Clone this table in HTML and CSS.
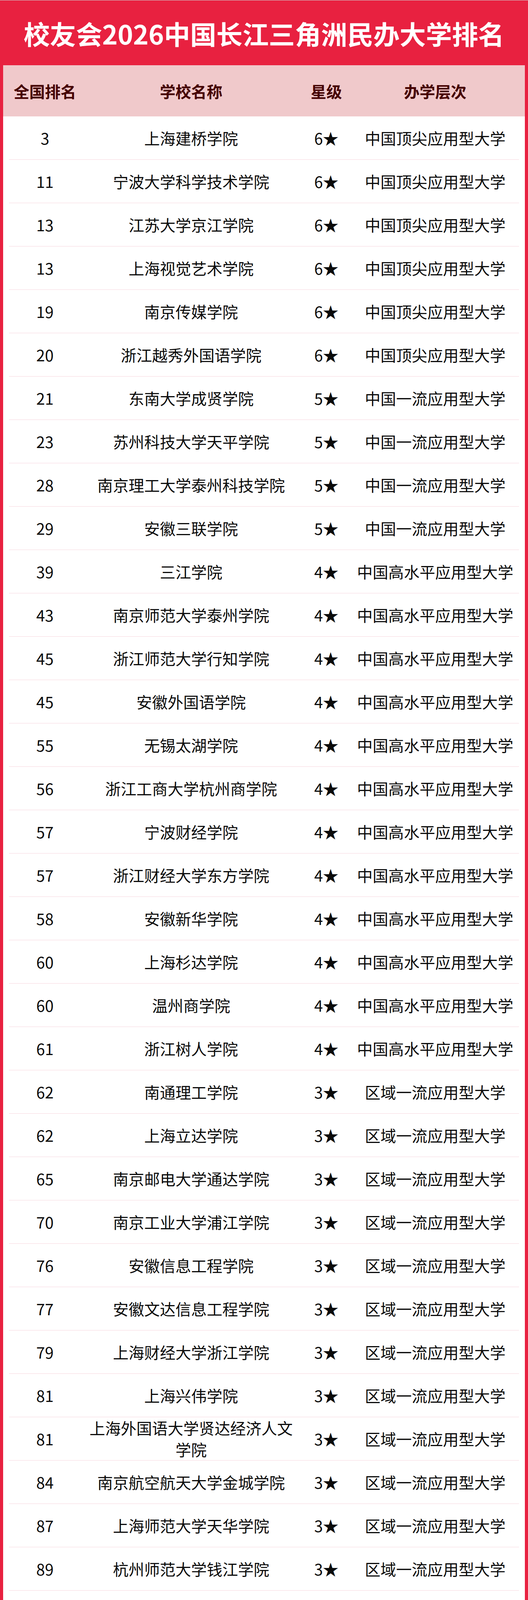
FILE: index.html
```html
<!DOCTYPE html>
<html lang="zh-CN">
<head>
<meta charset="utf-8">
<title>校友会2026中国长江三角洲民办大学排名</title>
<link rel="stylesheet" href="styles.css">
</head>
<body>
<div class="page">
  <h1 class="title">校友会2026中国长江三角洲民办大学排名</h1>
  <div class="sheet">
    <div class="thead">
      <div>全国排名</div><div>学校名称</div><div>星级</div><div>办学层次</div>
    </div>
    <div class="tbody">
      <div class="row"><div>3</div><div class="name">上海建桥学院</div><div>6★</div><div>中国顶尖应用型大学</div></div>
      <div class="row"><div>11</div><div class="name">宁波大学科学技术学院</div><div>6★</div><div>中国顶尖应用型大学</div></div>
      <div class="row"><div>13</div><div class="name">江苏大学京江学院</div><div>6★</div><div>中国顶尖应用型大学</div></div>
      <div class="row"><div>13</div><div class="name">上海视觉艺术学院</div><div>6★</div><div>中国顶尖应用型大学</div></div>
      <div class="row"><div>19</div><div class="name">南京传媒学院</div><div>6★</div><div>中国顶尖应用型大学</div></div>
      <div class="row"><div>20</div><div class="name">浙江越秀外国语学院</div><div>6★</div><div>中国顶尖应用型大学</div></div>
      <div class="row"><div>21</div><div class="name">东南大学成贤学院</div><div>5★</div><div>中国一流应用型大学</div></div>
      <div class="row"><div>23</div><div class="name">苏州科技大学天平学院</div><div>5★</div><div>中国一流应用型大学</div></div>
      <div class="row"><div>28</div><div class="name">南京理工大学泰州科技学院</div><div>5★</div><div>中国一流应用型大学</div></div>
      <div class="row"><div>29</div><div class="name">安徽三联学院</div><div>5★</div><div>中国一流应用型大学</div></div>
      <div class="row"><div>39</div><div class="name">三江学院</div><div>4★</div><div>中国高水平应用型大学</div></div>
      <div class="row"><div>43</div><div class="name">南京师范大学泰州学院</div><div>4★</div><div>中国高水平应用型大学</div></div>
      <div class="row"><div>45</div><div class="name">浙江师范大学行知学院</div><div>4★</div><div>中国高水平应用型大学</div></div>
      <div class="row"><div>45</div><div class="name">安徽外国语学院</div><div>4★</div><div>中国高水平应用型大学</div></div>
      <div class="row"><div>55</div><div class="name">无锡太湖学院</div><div>4★</div><div>中国高水平应用型大学</div></div>
      <div class="row"><div>56</div><div class="name">浙江工商大学杭州商学院</div><div>4★</div><div>中国高水平应用型大学</div></div>
      <div class="row"><div>57</div><div class="name">宁波财经学院</div><div>4★</div><div>中国高水平应用型大学</div></div>
      <div class="row"><div>57</div><div class="name">浙江财经大学东方学院</div><div>4★</div><div>中国高水平应用型大学</div></div>
      <div class="row"><div>58</div><div class="name">安徽新华学院</div><div>4★</div><div>中国高水平应用型大学</div></div>
      <div class="row"><div>60</div><div class="name">上海杉达学院</div><div>4★</div><div>中国高水平应用型大学</div></div>
      <div class="row"><div>60</div><div class="name">温州商学院</div><div>4★</div><div>中国高水平应用型大学</div></div>
      <div class="row"><div>61</div><div class="name">浙江树人学院</div><div>4★</div><div>中国高水平应用型大学</div></div>
      <div class="row"><div>62</div><div class="name">南通理工学院</div><div>3★</div><div>区域一流应用型大学</div></div>
      <div class="row"><div>62</div><div class="name">上海立达学院</div><div>3★</div><div>区域一流应用型大学</div></div>
      <div class="row"><div>65</div><div class="name">南京邮电大学通达学院</div><div>3★</div><div>区域一流应用型大学</div></div>
      <div class="row"><div>70</div><div class="name">南京工业大学浦江学院</div><div>3★</div><div>区域一流应用型大学</div></div>
      <div class="row"><div>76</div><div class="name">安徽信息工程学院</div><div>3★</div><div>区域一流应用型大学</div></div>
      <div class="row"><div>77</div><div class="name">安徽文达信息工程学院</div><div>3★</div><div>区域一流应用型大学</div></div>
      <div class="row"><div>79</div><div class="name">上海财经大学浙江学院</div><div>3★</div><div>区域一流应用型大学</div></div>
      <div class="row"><div>81</div><div class="name">上海兴伟学院</div><div>3★</div><div>区域一流应用型大学</div></div>
      <div class="row"><div>81</div><div class="name">上海外国语大学贤达经济人文学院</div><div>3★</div><div>区域一流应用型大学</div></div>
      <div class="row"><div>84</div><div class="name">南京航空航天大学金城学院</div><div>3★</div><div>区域一流应用型大学</div></div>
      <div class="row"><div>87</div><div class="name">上海师范大学天华学院</div><div>3★</div><div>区域一流应用型大学</div></div>
      <div class="row"><div>89</div><div class="name">杭州师范大学钱江学院</div><div>3★</div><div>区域一流应用型大学</div></div>
      <div class="row"><div>90</div><div class="name">南通大学杏林学院</div><div>3★</div><div>区域一流应用型大学</div></div>
      <div class="row"><div>90</div><div class="name">合肥经济学院</div><div>3★</div><div>区域一流应用型大学</div></div>
      <div class="row"><div>91</div><div class="name">南京审计大学金审学院</div><div>2★</div><div>区域高水平应用型大学</div></div>
      <div class="row"><div>91</div><div class="name">扬州大学广陵学院</div><div>2★</div><div>区域高水平应用型大学</div></div>
      <div class="row"><div>92</div><div class="name">阜阳理工学院</div><div>2★</div><div>区域高水平应用型大学</div></div>
      <div class="row"><div>97</div><div class="name">蚌埠工商学院</div><div>2★</div><div>区域高水平应用型大学</div></div>
      <div class="row"><div>97</div><div class="name">南京医科大学康达学院</div><div>2★</div><div>区域高水平应用型大学</div></div>
      <div class="row"><div>98</div><div class="name">江苏师范大学科文学院</div><div>2★</div><div>区域高水平应用型大学</div></div>
      <div class="row"><div>98</div><div class="name">同济大学浙江学院</div><div>2★</div><div>区域高水平应用型大学</div></div>
      <div class="row"><div>98</div><div class="name">江苏科技大学苏州理工学院</div><div>2★</div><div>区域高水平应用型大学</div></div>
      <div class="row"><div>98</div><div class="name">南京财经大学红山学院</div><div>2★</div><div>区域高水平应用型大学</div></div>
      <div class="row"><div>98</div><div class="name">南京师范大学中北学院</div><div>2★</div><div>区域高水平应用型大学</div></div>
      <div class="row"><div>98</div><div class="name">苏州大学应用技术学院</div><div>2★</div><div>区域高水平应用型大学</div></div>
      <div class="row"><div>99</div><div class="name">杭州电子科技大学信息工程学院</div><div>2★</div><div>区域高水平应用型大学</div></div>
      <div class="row"><div>99</div><div class="name">合肥城市学院</div><div>2★</div><div>区域高水平应用型大学</div></div>
      <div class="row"><div>99</div><div class="name">南京理工大学紫金学院</div><div>2★</div><div>区域高水平应用型大学</div></div>
      <div class="row"><div>99</div><div class="name">浙江工业大学之江学院</div><div>2★</div><div>区域高水平应用型大学</div></div>
      <div class="row"><div>116</div><div class="name">常州大学怀德学院</div><div>1★</div><div>区域知名应用型大学</div></div>
      <div class="row"><div>116</div><div class="name">浙江农林大学暨阳学院</div><div>1★</div><div>区域知名应用型大学</div></div>
      <div class="row"><div>118</div><div class="name">皖江工学院</div><div>2★</div><div>区域高水平应用型大学</div></div>
      <div class="row"><div>118</div><div class="name">淮北理工学院</div><div>2★</div><div>区域高水平应用型大学</div></div>
      <div class="row"><div>118</div><div class="name">马鞍山学院</div><div>2★</div><div>区域高水平应用型大学</div></div>
      <div class="row"><div>118</div><div class="name">芜湖学院</div><div>2★</div><div>区域高水平应用型大学</div></div>
      <div class="row"><div>118</div><div class="name">中国矿业大学徐海学院</div><div>2★</div><div>区域高水平应用型大学</div></div>
      <div class="row"><div>118</div><div class="name">安徽医科大学临床医学院</div><div>1★</div><div>区域知名应用型大学</div></div>
      <div class="row"><div>118</div><div class="name">南京中医药大学翰林学院</div><div>1★</div><div>区域知名应用型大学</div></div>
      <div class="row"><div>118</div><div class="name">温州医科大学仁济学院</div><div>1★</div><div>区域知名应用型大学</div></div>
      <div class="row"><div>118</div><div class="name">浙江理工大学科技与艺术学院</div><div>1★</div><div>区域知名应用型大学</div></div>
      <div class="row"><div>118</div><div class="name">浙江中医药大学滨江学院</div><div>1★</div><div>区域知名应用型大学</div></div>
      <div class="row"><div>130</div><div class="name">中国计量大学现代科技学院</div><div>1★</div><div>区域知名应用型大学</div></div>
    </div>
  </div>
  <div class="footer">排名详见：科学出版社《2026校友会中国大学排名：高考志愿填报指南》</div>
</div>
</body>
</html>
```

FILE: styles.css
```css
html, body {
  margin: 0;
  padding: 0;
}
body {
  background: #e82140;
  font-family: "Noto Sans CJK SC", "Noto Sans", sans-serif;
}
.page {
  width: 1351px;
  height: 7513px;
  overflow: hidden;
  border-top: 1px solid #cfcfcf;
  background: #e82140;
}
.title {
  margin: 0;
  height: 166px;
  display: flex;
  align-items: center;
  justify-content: center;
  color: #ffffff;
  font-size: 67px;
  font-weight: 700;
  line-height: 1;
}
.sheet {
  margin: 0 8px;
  background: #ffffff;
}
.thead {
  height: 131px;
  background: #f0c9cb;
  padding: 0 15px;
  display: grid;
  grid-template-columns: 184px 564px 128px 429px;
  align-items: center;
  text-align: center;
  color: #450000;
  font-size: 40px;
  font-weight: 700;
}
.tbody {
  padding: 0 15px;
}
.row {
  height: 110px;
  border-bottom: 1px solid #f7d6de;
  display: grid;
  grid-template-columns: 184px 564px 128px 429px;
  align-items: center;
  text-align: center;
  color: #0a0a0a;
  font-size: 40px;
  line-height: 55px;
}
.row .name {
  padding: 0 10px;
}
.footer {
  height: 112px;
  line-height: 112px;
  text-align: right;
  padding-right: 23px;
  color: #ffffff;
  font-size: 32px;
}
```
